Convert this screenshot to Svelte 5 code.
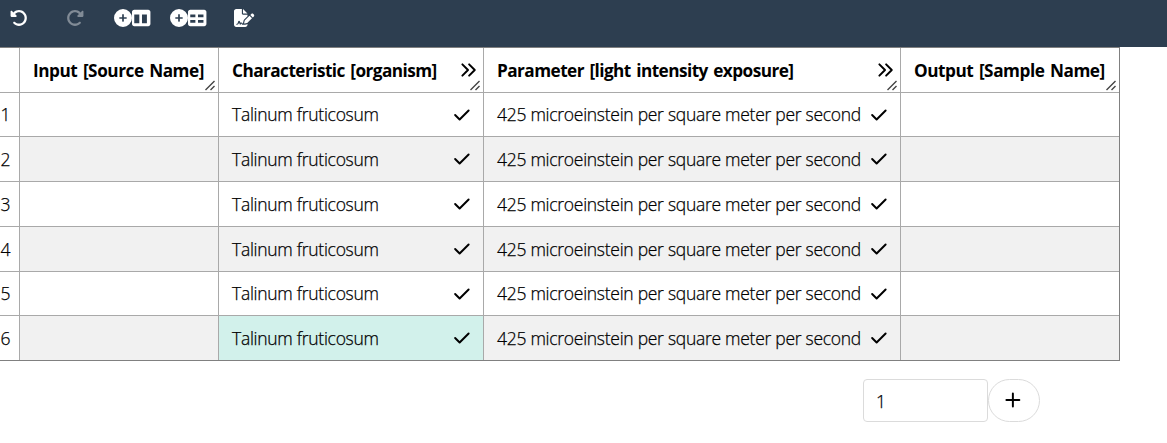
<script>
  const columns = [
    { key: 'input', title: 'Input [Source Name]' },
    { key: 'organism', title: 'Characteristic [organism]', term: true },
    { key: 'light', title: 'Parameter [light intensity exposure]', term: true },
    { key: 'output', title: 'Output [Sample Name]' }
  ];
  const record = {
    input: '',
    organism: 'Talinum fruticosum',
    light: '425 microeinstein per square meter per second',
    output: ''
  };
  const rows = [1, 2, 3, 4, 5, 6];
  let selected = $state({ row: 6, key: 'organism' });
  let amount = $state('1');

  const icons = {
    undo: [512, 'M48.500 224H40c-13.300 0-24-10.700-24-24V72c0-9.700 5.800-18.500 14.800-22.200s19.300-1.700 26.200 5.200L98.600 96.600c87.600-86.500 228.700-86.200 315.800 1c87.500 87.500 87.500 229.300 0 316.800s-229.300 87.500-316.800 0c-12.500-12.500-12.500-32.800 0-45.300s32.800-12.500 45.300 0c62.500 62.500 163.800 62.500 226.300 0s62.500-163.800 0-226.300c-62.200-62.200-162.700-62.500-225.300-1L185 183c6.900 6.900 8.900 17.200 5.200 26.200s-12.500 14.800-22.200 14.800H48.500z'],
    circlePlus: [512, 'M256 512A256 256 0 1 0 256 0a256 256 0 1 0 0 512zM232 344V280H168c-13.300 0-24-10.700-24-24s10.700-24 24-24h64V168c0-13.300 10.700-24 24-24s24 10.700 24 24v64h64c13.300 0 24 10.700 24 24s-10.700 24-24 24H280v64c0 13.300-10.700 24-24 24s-24-10.700-24-24z'],
    columns: [512, 'M0 82C0 46.700 28.700 18 64 18H460c35.300 0 64 28.700 64 64V430c0 35.300-28.700 64-64 64H64c-35.300 0-64-28.700-64-64V82zm64 76V406H208V158H64zM424 158H284V406H424V158z'],
    table: [512, 'M64 232V158H210v74H64zM64 314v74H210V314H64zM284 388V314H440v74H284zM440 232H284V158H440v74zM64 18C28.700 18 0 46.700 0 82V430c0 35.300 28.700 64 64 64H460c35.300 0 64-28.700 64-64V82c0-35.300-28.700-64-64-64H64z'],
    signature: [576, 'M64 0C28.700 0 0 28.700 0 64V448c0 35.300 28.700 64 64 64H320c35.300 0 64-28.700 64-64V428.700c-2.700 1.100-5.400 2-8.200 2.700l-60.100 15c-3 .7-6 1.200-9 1.400c-.9 .1-1.800 .2-2.700 .2H240c-6.100 0-11.600-3.400-14.300-8.800l-8.800-17.700c-1.700-3.400-5.100-5.500-8.800-5.500s-7.200 2.100-8.800 5.500l-8.800 17.700c-2.900 5.900-9.200 9.400-15.700 8.800s-12.100-5.100-13.900-11.300L144 381l-9.800 32.800c-6.100 20.300-24.800 34.200-46 34.200H80c-8.800 0-16-7.200-16-16s7.200-16 16-16h8.200c7.100 0 13.300-4.600 15.300-11.400l14.900-49.500c3.400-11.300 13.800-19.100 25.600-19.100s22.200 7.800 25.600 19.100l11.600 38.600c7.400-6.200 16.800-9.700 26.800-9.700c15.900 0 30.400 9 37.500 23.200l4.400 8.800h8.900c-3.100-8.800-3.700-18.400-1.400-27.800l15-60.100c2.800-11.300 8.600-21.500 16.800-29.700L384 203.600V160H256c-17.700 0-32-14.300-32-32V0H64zM256 0V128H384L256 0zM549.800 139.700c-15.600-15.600-40.900-15.600-56.600 0l-29.400 29.400 71 71 29.400-29.400c15.600-15.600 15.600-40.900 0-56.600l-14.400-14.400zM311.900 321c-4.100 4.100-7 9.200-8.400 14.900l-15 60.100c-1.400 5.500 .2 11.200 4.200 15.200s9.700 5.600 15.200 4.200l60.100-15c5.600-1.400 10.800-4.300 14.900-8.400L512.100 262.700l-71-71L311.900 321z']
  };
  const strokes = {
    check: [448, 'M32 256 160 384 416 128'],
    angles: [512, 'M96 96 256 256 96 416M288 96 448 256 288 416'],
    plus: [448, 'M224 72V440M40 256H408']
  };
</script>

{#snippet icon(name)}
  <svg class="icon {name}" viewBox="0 0 {icons[name][0]} 512" aria-hidden="true"><path fill-rule="evenodd" d={icons[name][1]} /></svg>
{/snippet}

{#snippet line(name)}
  <svg class="icon line {name}" viewBox="0 0 {strokes[name][0]} 512" aria-hidden="true"><path d={strokes[name][1]} /></svg>
{/snippet}

<div class="app">
  <nav class="toolbar">
    <button class="tool">{@render icon('undo')}</button>
    <button class="tool redo" disabled>{@render icon('undo')}</button>
    <button class="tool add-column">{@render icon('circlePlus')}{@render icon('columns')}</button>
    <button class="tool add-rows">{@render icon('circlePlus')}{@render icon('table')}</button>
    <button class="tool">{@render icon('signature')}</button>
  </nav>

  <div class="sheet">
    <div class="cell corner"></div>
    {#each columns as col}
      <div class="cell head {col.key}">
        <span class="title">{col.title}</span>
        {#if col.term}{@render line('angles')}{/if}
        <svg class="grip" viewBox="0 0 11 11" aria-hidden="true"><path d="M.5 10 9.500 1M5.500 10l4-4" /></svg>
      </div>
    {/each}
    {#each rows as row}
      <div class="cell index">{row}</div>
      {#each columns as col}
        <div
          class="cell body {col.key}"
          class:even={row % 2 === 0}
          class:selected={selected.row === row && selected.key === col.key}
        >
          {#if record[col.key]}
            <span class="value">{record[col.key]}</span>
            {@render line('check')}
          {/if}
        </div>
      {/each}
    {/each}
  </div>

  <div class="add">
    <input bind:value={amount} />
    <button class="plus-button">{@render line('plus')}</button>
  </div>
</div>

<style>
  :global(body) {
    background: #fff;
    overflow: hidden;
  }
  .app {
    font: 300 17.5px/24px 'Open Sans', 'Noto Sans', sans-serif;
    color: #000;
    height: 443px;
    overflow: hidden;
  }
  button {
    font: inherit;
    color: inherit;
    background: none;
    border: 0;
    padding: 0;
  }
  .icon {
    height: 18px;
    width: auto;
    flex: none;
    fill: currentColor;
    display: block;
    overflow: visible;
  }
  .line {
    fill: none;
    stroke: currentColor;
    stroke-width: 56;
    stroke-linecap: round;
    stroke-linejoin: round;
  }
  .toolbar {
    height: 47px;
    box-sizing: border-box;
    background: #2d3e50;
    color: #fff;
    display: flex;
    align-items: flex-start;
    padding: 9px 0 0 9.5px;
  }
  .tool {
    display: flex;
  }
  .redo {
    margin-left: 38.5px;
    color: #818b96;
    transform: scaleX(-1);
  }
  .add-column {
    margin-left: 30px;
  }
  .add-rows {
    margin: 0 28px 0 20px;
  }
  .sheet {
    width: 1120px;
    box-sizing: border-box;
    border: solid #808080;
    border-width: 1px 1px 1px 0;
    display: grid;
    grid-template-columns: 20px 199px 265px 417px 218px;
    grid-template-rows: 45px 44px 45px 45px 45px 44px 44px;
  }
  .cell {
    box-sizing: border-box;
    border: solid #a9a9a9;
    border-width: 0 1px 1px 0;
    display: flex;
    align-items: center;
    position: relative;
    white-space: nowrap;
    min-width: 0;
  }
  .cell:nth-child(5n) {
    border-right: 0;
  }
  .cell:nth-last-child(-n + 5) {
    border-bottom: 0;
  }
  .index {
    justify-content: flex-end;
    padding: 0 8.5px 1px 0;
    -webkit-text-stroke: 0.25px #000;
  }
  .head {
    padding: 0 6.5px 0 13px;
    font-size: 17.2px;
    font-weight: 700;
    justify-content: space-between;
  }
  .title {
    padding-top: 2px;
    letter-spacing: -0.54px;
    word-spacing: 1.5px;
  }
  .input .title,
  .output .title {
    letter-spacing: -0.45px;
  }
  .body {
    padding: 0 13.5px 0 13px;
    justify-content: space-between;
  }
  .value {
    letter-spacing: -0.28px;
    padding-bottom: 1px;
    -webkit-text-stroke: 0.25px #000;
  }
  .even {
    background: #f1f1f1;
  }
  .selected {
    background: #d2f1eb;
  }
  .grip {
    position: absolute;
    right: 2px;
    bottom: 1px;
    width: 11px;
    height: 11px;
    fill: none;
    stroke: #444;
    stroke-width: 1.4;
  }
  .add {
    display: flex;
    margin: 18px 0 0 863px;
  }
  input {
    width: 125px;
    height: 43px;
    box-sizing: border-box;
    border: 1px solid #dbdbdb;
    border-radius: 4px;
    padding: 0 12px;
    font: inherit;
    color: inherit;
    outline: 0;
    -webkit-text-stroke: 0.25px #000;
  }
  .plus-button {
    width: 52px;
    height: 43px;
    box-sizing: border-box;
    border: 1px solid #dbdbdb;
    border-radius: 22px;
    display: flex;
    align-items: center;
    justify-content: center;
    padding: 0 2px 1px 0;
  }
</style>
